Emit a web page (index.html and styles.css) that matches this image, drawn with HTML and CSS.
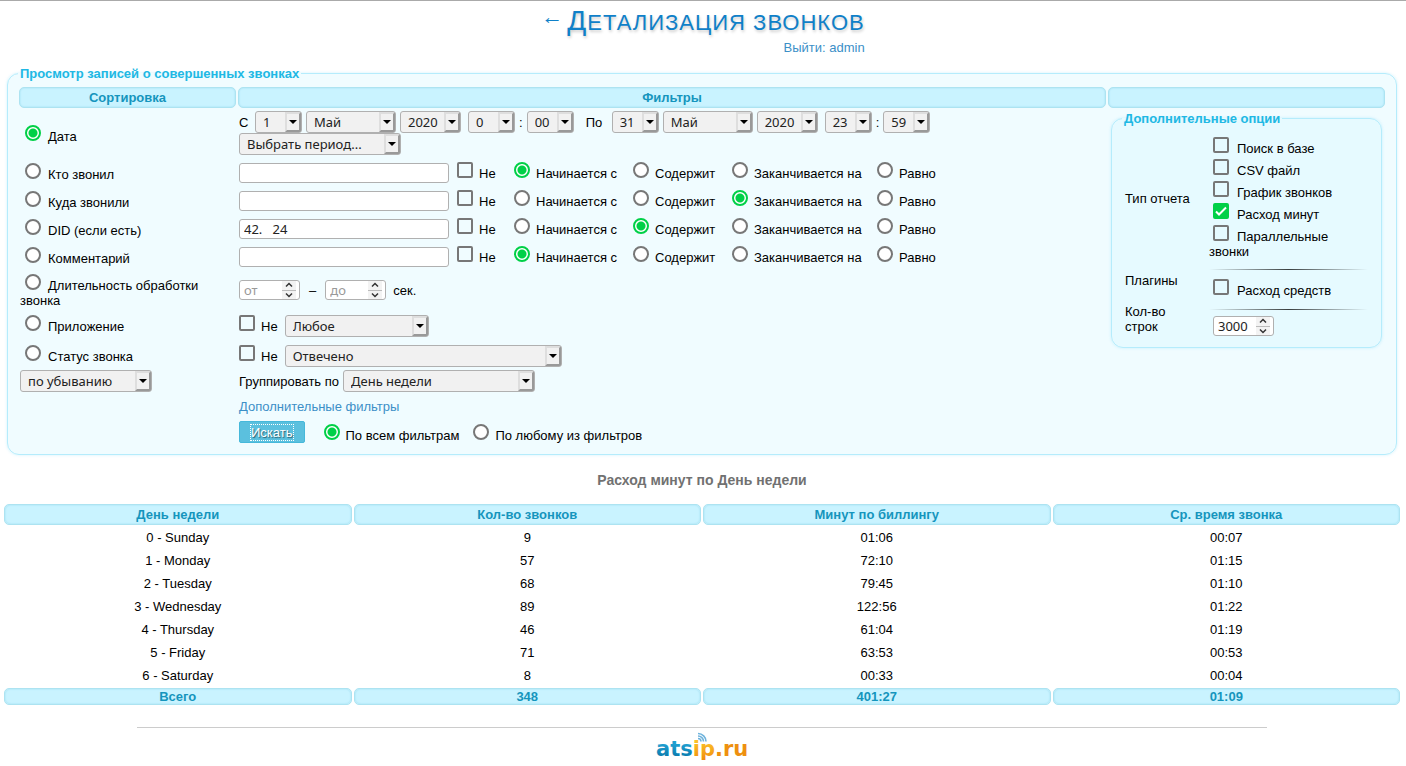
FILE: index.html
```html
<!DOCTYPE html>
<html lang="ru">
<head>
<meta charset="utf-8">
<title>Детализация звонков</title>
<link rel="stylesheet" href="styles.css">
</head>
<body>
<header class="page-head">
  <div class="brand">
    <h1 class="page-title"><a class="back" href="#back" aria-label="Назад">←</a><span class="title-text">Детализация звонков</span></h1>
    <a class="logout" href="#logout">Выйти: admin</a>
  </div>
</header>

<form class="search">
  <fieldset class="panel">
    <legend>Просмотр записей о совершенных звонках</legend>
    <div class="filters">
      <div class="head-cell">Сортировка</div>
      <div class="head-cell">Фильтры</div>
      <div class="head-cell"></div>

      <div class="sort roomy"><label><input type="radio" name="order" checked>Дата</label></div>
      <div class="dates">
        <div class="line">
          <span class="from">С</span>
          <select class="w-short" aria-label="День с"><option>1</option></select>
          <select class="w-month" aria-label="Месяц с"><option>Май</option></select>
          <select class="w-year" aria-label="Год с"><option>2020</option></select>
          <span class="time">
            <select class="w-short" aria-label="Час с"><option>0</option></select>
            <span>:</span>
            <select class="w-short" aria-label="Минута с"><option>00</option></select>
          </span>
          <span class="until">По</span>
          <select class="w-short" aria-label="День по"><option>31</option></select>
          <select class="w-month" aria-label="Месяц по"><option>Май</option></select>
          <select class="w-year" aria-label="Год по"><option>2020</option></select>
          <span class="time">
            <select class="w-short" aria-label="Час по"><option>23</option></select>
            <span>:</span>
            <select class="w-short" aria-label="Минута по"><option>59</option></select>
          </span>
        </div>
        <select class="w-period" aria-label="Период"><option>Выбрать период...</option></select>
      </div>

      <div class="sort"><label><input type="radio" name="order">Кто звонил</label></div>
      <div class="match">
        <input type="text" class="text" aria-label="Кто звонил">
        <label><input type="checkbox">Не</label>
        <label><input type="radio" name="src" checked>Начинается с</label>
        <label><input type="radio" name="src">Содержит</label>
        <label><input type="radio" name="src">Заканчивается на</label>
        <label><input type="radio" name="src">Равно</label>
      </div>

      <div class="sort"><label><input type="radio" name="order">Куда звонили</label></div>
      <div class="match">
        <input type="text" class="text" aria-label="Куда звонили">
        <label><input type="checkbox">Не</label>
        <label><input type="radio" name="dst">Начинается с</label>
        <label><input type="radio" name="dst">Содержит</label>
        <label><input type="radio" name="dst" checked>Заканчивается на</label>
        <label><input type="radio" name="dst">Равно</label>
      </div>

      <div class="sort"><label><input type="radio" name="order">DID (если есть)</label></div>
      <div class="match">
        <input type="text" class="text" aria-label="DID" value="42.   24">
        <label><input type="checkbox">Не</label>
        <label><input type="radio" name="did">Начинается с</label>
        <label><input type="radio" name="did" checked>Содержит</label>
        <label><input type="radio" name="did">Заканчивается на</label>
        <label><input type="radio" name="did">Равно</label>
      </div>

      <div class="sort"><label><input type="radio" name="order">Комментарий</label></div>
      <div class="match">
        <input type="text" class="text" aria-label="Комментарий">
        <label><input type="checkbox">Не</label>
        <label><input type="radio" name="note" checked>Начинается с</label>
        <label><input type="radio" name="note">Содержит</label>
        <label><input type="radio" name="note">Заканчивается на</label>
        <label><input type="radio" name="note">Равно</label>
      </div>

      <div class="sort roomy"><label><input type="radio" name="order">Длительность обработки звонка</label></div>
      <div class="line duration">
        <input type="number" class="number" placeholder="от" aria-label="Длительность от">
        <span>–</span>
        <input type="number" class="number" placeholder="до" aria-label="Длительность до">
        <span class="unit">сек.</span>
      </div>

      <div class="sort"><label><input type="radio" name="order">Приложение</label></div>
      <div class="line negated">
        <label><input type="checkbox">Не</label>
        <select class="w-app" aria-label="Приложение"><option>Любое</option></select>
      </div>

      <div class="sort"><label><input type="radio" name="order">Статус звонка</label></div>
      <div class="line negated">
        <label><input type="checkbox">Не</label>
        <select class="w-status" aria-label="Статус звонка"><option>Отвечено</option></select>
      </div>

      <div class="sort-dir"><select class="w-dir" aria-label="Порядок"><option>по убыванию</option></select></div>
      <div class="line group">
        <label for="group">Группировать по</label>
        <select id="group" class="w-group"><option>День недели</option></select>
      </div>

      <div class="line"><a class="more" href="#more">Дополнительные фильтры</a></div>

      <div class="line submit">
        <button type="submit" class="find"><span>Искать</span></button>
        <label><input type="radio" name="mode" checked>По всем фильтрам</label>
        <label><input type="radio" name="mode">По любому из фильтров</label>
      </div>

      <aside class="side">
        <fieldset class="panel options">
          <legend>Дополнительные опции</legend>
          <div class="option-grid">
            <div>Тип отчета</div>
            <div class="checks">
              <label><input type="checkbox">Поиск в базе</label>
              <label><input type="checkbox">CSV файл</label>
              <label><input type="checkbox">График звонков</label>
              <label><input type="checkbox" checked>Расход минут</label>
              <label><input type="checkbox">Параллельные звонки</label>
            </div>
            <div>Плагины</div>
            <div class="checks">
              <hr class="fade">
              <label><input type="checkbox">Расход средств</label>
            </div>
            <label class="limit-label" for="limit">Кол-во строк</label>
            <div class="limit">
              <hr class="fade">
              <input type="number" id="limit" class="number" value="3000">
            </div>
          </div>
        </fieldset>
      </aside>
    </div>
  </fieldset>
</form>

<main>
  <h2 class="report-title">Расход минут по День недели</h2>
  <table class="report">
    <thead>
      <tr><th>День недели</th><th>Кол-во звонков</th><th>Минут по биллингу</th><th>Ср. время звонка</th></tr>
    </thead>
    <tbody>
      <tr><td>0 - Sunday</td><td>9</td><td>01:06</td><td>00:07</td></tr>
      <tr><td>1 - Monday</td><td>57</td><td>72:10</td><td>01:15</td></tr>
      <tr><td>2 - Tuesday</td><td>68</td><td>79:45</td><td>01:10</td></tr>
      <tr><td>3 - Wednesday</td><td>89</td><td>122:56</td><td>01:22</td></tr>
      <tr><td>4 - Thursday</td><td>46</td><td>61:04</td><td>01:19</td></tr>
      <tr><td>5 - Friday</td><td>71</td><td>63:53</td><td>00:53</td></tr>
      <tr><td>6 - Saturday</td><td>8</td><td>00:33</td><td>00:04</td></tr>
    </tbody>
    <tfoot>
      <tr><th>Всего</th><th>348</th><th>401:27</th><th>01:09</th></tr>
    </tfoot>
  </table>
</main>

<footer class="page-foot">
  <a class="logo" href="#atsip">
    <svg width="94" height="32" viewBox="0 0 94 32" role="img" aria-label="atsip.ru">
      <defs>
        <linearGradient id="blue" x1="0" y1="0" x2="0" y2="1"><stop offset="0.3" stop-color="#1f9fd0"/><stop offset="0.8" stop-color="#0b7db0"/></linearGradient>
        <linearGradient id="gold" x1="0" y1="0" x2="0" y2="1"><stop offset="0.2" stop-color="#fbc02a"/><stop offset="1" stop-color="#ef8a0c"/></linearGradient>
      </defs>
      <g fill="none" stroke="#6fb3dc" stroke-width="1.6">
        <path d="M43 6.500a3 3 0 0 1 3 3"/>
        <path d="M43 4a5.500 5.500 0 0 1 5.500 5.500"/>
        <path d="M43 1.500a8 8 0 0 1 8 8"/>
      </g>
      <text class="logo-text" x="1" y="24"><tspan fill="url(#blue)">ats</tspan><tspan fill="url(#gold)">ip</tspan><tspan fill="#ee900f">.ru</tspan></text>
    </svg>
  </a>
</footer>
</body>
</html>
```
FILE: styles.css
```css
* { box-sizing: border-box; }

body {
  margin: 0;
  border-top: 1px solid #aaa;
  background: #fff;
  color: #000;
  font: 13px/15px "Liberation Sans", Arial, sans-serif;
}

a { color: #3c8fc7; text-decoration: none; }

/* Page heading */
.page-head { display: flex; justify-content: center; }
.brand { display: flex; flex-direction: column; align-items: flex-end; height: 65px; }
.page-title {
  display: flex;
  align-items: flex-start;
  gap: 4px;
  height: 39px;
  margin: 0;
  color: #0f80c8;
  font-size: 22px;
  font-weight: 400;
  line-height: 39px;
}
.title-text {
  display: block;
  letter-spacing: 1px;
  text-transform: uppercase;
  text-shadow: 1px 2px 3px rgba(0, 0, 0, .2);
}
.title-text::first-letter { font-size: 28px; }
.back { color: inherit; font-size: 22px; line-height: 32px; }
.logout { line-height: 15px; }

/* Framed groups */
.panel {
  min-width: 0;
  margin: 0;
  padding: 6px 11px 9px;
  border: 1px solid #b5ecfc;
  border-radius: 12px;
  background: #f0fcff;
  box-shadow: 0 0 3px rgba(120, 215, 245, .35);
}
.panel > legend { padding: 0 2px; margin-left: -1px; color: #20b8e4; font-weight: 700; }
.search { padding: 0 9px 0 7px; }

.filters {
  display: grid;
  grid-template-columns: 217px minmax(0, 1fr) 277px;
  grid-template-rows: 21px 51px repeat(4, 28px) 38px 33px 27px 24px 26px 26px;
  column-gap: 2px;
  align-items: center;
}
.head-cell, .report th {
  border: 1px solid #ade3f1;
  border-radius: 5px;
  background: #c9f3ff;
  box-shadow: inset 0 0 2px #9adcef;
  color: #1595bd;
  font-weight: 700;
  text-align: center;
}
.head-cell { align-self: stretch; grid-row: 1; line-height: 19px; }

.sort, .sort-dir { grid-column: 1; padding-left: 1px; }
.sort { padding-bottom: 2px; }
.roomy { padding-top: 2px; padding-bottom: 0; }
.dates, .match, .line { grid-column: 2; padding-left: 1px; }
.dates { padding-bottom: 1px; }
.line { display: flex; align-items: center; gap: 4px; }

/* Tick boxes and radios */
input[type="radio"], input[type="checkbox"] {
  appearance: none;
  width: 16px;
  height: 16px;
  margin: 0 6px 0 0;
  border: 2px solid #777;
  background: #fff;
  vertical-align: baseline;
}
input[type="radio"] { border-radius: 50%; }
input[type="checkbox"] { border-radius: 2px; background: transparent; }
input[type="radio"]:checked {
  border-color: #00d047;
  background: radial-gradient(circle, #00d047 4px, #fff 5px);
}
input[type="checkbox"]:checked {
  border-color: #00d047;
  background: #00d047 url("data:image/svg+xml,%3Csvg xmlns='http://www.w3.org/2000/svg' width='16' height='16'%3E%3Cpath d='M3 8.500l3 3L13 4.500' fill='none' stroke='%23fff' stroke-width='2'/%3E%3C/svg%3E") center / 16px 16px no-repeat;
  background-origin: border-box;
}
.sort input[type="radio"] { margin: 0 7px 0 5px; }

/* Fields */
select, .text, .number {
  margin: 0;
  border: 1px solid #b0b0b0;
  border-radius: 3px;
  color: #222;
  font: 13px/18px "Noto Sans", "Open Sans", sans-serif;
}
select {
  appearance: none;
  display: block;
  flex: none;
  height: 22px;
  padding: 0 17px 0 7px;
  background: #f1f1f1 url("data:image/svg+xml,%3Csvg xmlns='http://www.w3.org/2000/svg' width='16' height='20'%3E%3Cpath d='M0 0h16v20H0z' fill='%23f1f1f1'/%3E%3Cpath d='M0 0h16l-2 2H2v16l-2 2z' fill='%23dedede'/%3E%3Cpath d='M16 0v20H0l2-2h12V2z' fill='%23999'/%3E%3Cpath d='M4 8h8l-4 4z' fill='%23000'/%3E%3C/svg%3E") right center no-repeat;
}
.text { width: 210px; height: 20px; padding: 0 4px; background: #fff; }
.number {
  appearance: textfield;
  width: 61px;
  height: 20px;
  padding: 0 18px 0 4px;
  background: #fff url("data:image/svg+xml,%3Csvg xmlns='http://www.w3.org/2000/svg' width='14' height='18'%3E%3Cpath d='M0 0h14v18H0z' fill='%23f3f3f3'/%3E%3Cpath d='M0 9.500h14' stroke='%23bbb'/%3E%3Cpath d='M4 5.500l3-3 3 3M4 12.500l3 3 3-3' fill='none' stroke='%23333' stroke-width='1.500'/%3E%3C/svg%3E") right 3px center no-repeat;
}
.number::-webkit-inner-spin-button { appearance: none; margin: 0; }
.number::placeholder { color: #999; }

.w-short { width: 47px; }
.w-month { width: 90px; }
.w-year { width: 61px; }
.w-period { width: 162px; }
.w-app { width: 144px; }
.w-status { width: 277px; }
.w-group { width: 192px; }
.w-dir { width: 132px; }

.dates .line { padding-left: 0; }
.from { width: 12px; }
.time { display: flex; align-items: center; gap: 4px; margin-left: 3px; }
.until { margin-left: 8px; width: 22px; }

.match { display: grid; grid-template-columns: 218px 57px 119px 99px 145px 1fr; align-items: center; }
.match label { padding-bottom: 3px; white-space: nowrap; }
.duration { gap: 9px; }
.unit { margin-left: -2px; }
.negated { align-items: flex-start; gap: 7px; }
.submit { align-items: flex-end; gap: 14px; }
.find {
  height: 22px;
  margin-right: 5px;
  padding: 0 11px;
  border: 1px solid #46b8da;
  border-radius: 2px;
  background: #5bc0de;
  color: #fff;
  font: inherit;
  text-shadow: 1px 1px 1px rgba(0, 0, 0, .5);
}
.find span { display: block; outline: 1px dotted #fff; }

/* Extra options */
.side { grid-column: 3; grid-row: 2 / span 11; align-self: start; padding: 3px 3px 0; }
.options { padding: 11px 13px 11px; background: #e6faff; }
.options > legend { margin-left: -3px; }
.option-grid { display: grid; grid-template-columns: 84px minmax(0, 1fr); row-gap: 4px; align-items: center; }
.checks { display: grid; gap: 3px; }
.checks input[type="checkbox"] { margin: 0 8px 0 4px; }
.limit-label { width: 50px; }
.fade {
  width: 100%;
  height: 1px;
  margin: 6px 0;
  border: 0;
  background: linear-gradient(to right, rgba(0, 0, 0, 0), rgba(0, 0, 0, .75), rgba(0, 0, 0, 0));
}
.limit { padding-top: 1px; }
.limit .number { display: block; margin-left: 4px; }

/* Report */
.report-title { margin: 17px 4px 13px 2px; color: #717171; font-size: 14px; line-height: 17px; text-align: center; }
.report {
  width: calc(100% - 6px);
  margin: 0 4px 0 2px;
  border-spacing: 2px;
  table-layout: fixed;
  text-align: center;
}
.report th { padding: 0; line-height: 19px; }
.report td { padding: 3px; }
.report tfoot th { line-height: 15px; }

/* Footer */
.page-foot {
  margin: 20px 139px 0 137px;
  border-top: 1px solid #ccc;
  text-align: center;
}
.logo { display: inline-block; padding-top: 4px; }
.logo svg { display: block; }
.logo-text { font: 700 21px "DejaVu Sans", sans-serif; }
```
